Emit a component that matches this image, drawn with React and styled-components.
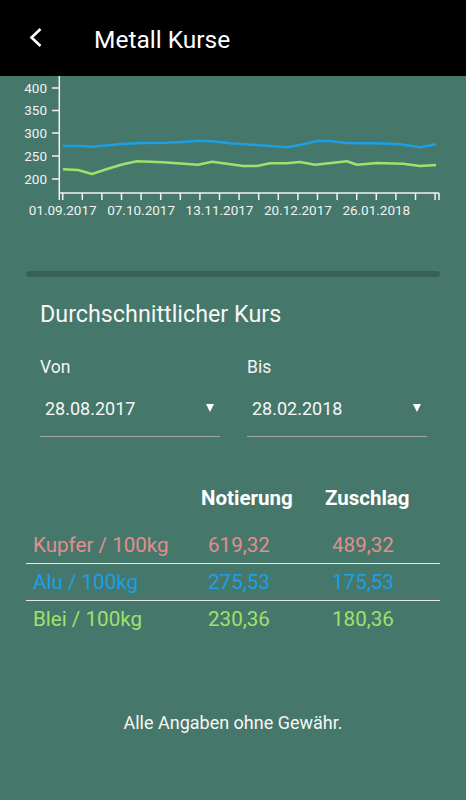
import styled, { createGlobalStyle } from "styled-components";

const GlobalStyle = createGlobalStyle`
  body {
    margin: 0;
    background: #45786a;
    font-family: Roboto, "Noto Sans", sans-serif;
    color: #fff;
  }
`;

// chart data, already in page pixels (x, y)
const blue = [
  [63, 146], [82, 146], [92, 146.7], [103, 145.7], [122, 144], [142, 143],
  [167, 142.7], [187, 141.7], [198, 140.7], [212, 141.3], [230, 143.3],
  [257, 145], [273, 146.3], [287, 147.3], [300, 145], [317, 141], [330, 141],
  [347, 143], [357, 143.3], [377, 143.3], [400, 144.3], [420, 147.3], [436, 144.3],
];

const green = [
  [63, 169.3], [78, 170], [92, 174], [107, 169], [123, 164.3], [137, 161.3],
  [163, 162.3], [198, 164.7], [212, 161.7], [227, 163.7], [243, 166], [257, 166],
  [270, 163.3], [287, 163.3], [300, 162], [315, 164.7], [347, 161.3], [357, 164.7],
  [377, 163], [403, 163.7], [420, 166], [436, 165],
];

const yTicks = [
  { label: "400", y: 88 },
  { label: "350", y: 110.5 },
  { label: "300", y: 133 },
  { label: "250", y: 156 },
  { label: "200", y: 179 },
];

const xLabels = ["01.09.2017", "07.10.2017", "13.11.2017", "20.12.2017", "26.01.2018"];

const rows = [
  { name: "Kupfer / 100kg", notierung: "619,32", zuschlag: "489,32", color: "#e38e8e" },
  { name: "Alu / 100kg", notierung: "275,53", zuschlag: "175,53", color: "#1c9fe5" },
  { name: "Blei / 100kg", notierung: "230,36", zuschlag: "180,36", color: "#a0e06e" },
];

const toPoints = pts => pts.map(p => p.join(",")).join(" ");

const Chart = () => {
  const ticks = [];
  for (let i = 0; i < 20; i++) ticks.push(62.7 + i * 19.6);
  return (
    <ChartSvg viewBox="0 76 466 144" width="466" height="144">
      <g stroke="#f2f2f2" strokeWidth="1.5" fill="none">
        <line x1="59.3" y1="76" x2="59.3" y2="200" />
        <line x1="59.3" y1="193" x2="439" y2="193" />
        <line x1="439" y1="193" x2="439" y2="200" />
        {yTicks.map(t => (
          <line key={t.label} x1="52" y1={t.y} x2="59.3" y2={t.y} />
        ))}
        {ticks.map(x => (
          <line key={x} x1={x} y1="193" x2={x} y2="200" />
        ))}
      </g>
      <g fill="#f2f2f2" fontSize="13.5" fontFamily="Roboto, sans-serif">
        {yTicks.map(t => (
          <text key={t.label} x="47" y={t.y + 4.8} textAnchor="end">
            {t.label}
          </text>
        ))}
        {xLabels.map((l, i) => (
          <text key={l} x={62.7 + i * 4 * 19.6} y="215" textAnchor="middle">
            {l}
          </text>
        ))}
      </g>
      <polyline points={toPoints(blue)} fill="none" stroke="#1c9fe5" strokeWidth="2.6" strokeLinejoin="round" />
      <polyline points={toPoints(green)} fill="none" stroke="#a0e06e" strokeWidth="2.6" strokeLinejoin="round" />
    </ChartSvg>
  );
};

const DateSelect = ({ label, value }) => (
  <Field>
    <FieldLabel>{label}</FieldLabel>
    <SelectBox>
      <span>{value}</span>
      <Caret />
    </SelectBox>
  </Field>
);

const App = () => {
  return (
    <>
      <GlobalStyle />
      <Header>
        <BackButton>
          <svg width="14" height="22" viewBox="0 0 14 22">
            <polyline points="11.5,2 2.5,10.5 11.5,19" fill="none" stroke="#fff" strokeWidth="2.6" />
          </svg>
        </BackButton>
        <Title>Metall Kurse</Title>
      </Header>

      <Chart />

      <Divider />

      <Section>
        <SectionTitle>Durchschnittlicher Kurs</SectionTitle>
        <DateGrid>
          <DateSelect label="Von" value="28.08.2017" />
          <DateSelect label="Bis" value="28.02.2018" />
        </DateGrid>
      </Section>

      <Table>
        <HeadRow>
          <span />
          <HeadCell>Notierung</HeadCell>
          <HeadCell>Zuschlag</HeadCell>
        </HeadRow>
        {rows.map(r => (
          <Row key={r.name} color={r.color}>
            <NameCell>{r.name}</NameCell>
            <ValueCell>{r.notierung}</ValueCell>
            <ValueCell>{r.zuschlag}</ValueCell>
          </Row>
        ))}
      </Table>

      <Footer>Alle Angaben ohne Gewähr.</Footer>
    </>
  );
};

export default App;

const Header = styled.header`
  height: 76px;
  background: #000;
  display: flex;
  align-items: center;
`;

const BackButton = styled.div`
  width: 94px;
  padding-left: 29px;
  box-sizing: border-box;
  display: flex;
  align-items: center;
  svg {
    display: block;
  }
`;

const Title = styled.h1`
  margin: 0 0 -4px 0;
  font-size: 24.5px;
  font-weight: 400;
  color: #fff;
  line-height: 28px;
`;

const ChartSvg = styled.svg`
  display: block;
`;

const Divider = styled.div`
  margin: 51px 26px 0 26px;
  height: 6px;
  border-radius: 3px;
  background: #386155;
`;

const Section = styled.section`
  padding: 0 39px 0 40px;
`;

const SectionTitle = styled.h2`
  margin: 23px 0 0 0;
  font-size: 23.3px;
  font-weight: 400;
  line-height: 28px;
  color: #f6f6f6;
`;

const DateGrid = styled.div`
  display: grid;
  grid-template-columns: 180px 180px;
  column-gap: 27px;
  margin-top: 29px;
`;

const Field = styled.div`
  display: flex;
  flex-direction: column;
`;

const FieldLabel = styled.div`
  font-size: 17.5px;
  line-height: 20px;
  color: #f4f4f4;
`;

const SelectBox = styled.div`
  margin-top: 21px;
  padding: 0 6px 16px 5px;
  border-bottom: 1.5px solid #9fa8a4;
  display: flex;
  align-items: center;
  justify-content: space-between;
  font-size: 18px;
  line-height: 22px;
  color: #f6f6f6;
`;

const Caret = styled.span`
  width: 0;
  height: 0;
  border-left: 4px solid transparent;
  border-right: 4px solid transparent;
  border-top: 8px solid #fff;
  margin-top: -2px;
`;

const Table = styled.div`
  margin: 49px 26px 0 26px;
`;

const columns = `168px 124px 1fr`;

const HeadRow = styled.div`
  display: grid;
  grid-template-columns: ${columns};
  padding-left: 7px;
  margin-bottom: 17px;
`;

const HeadCell = styled.div`
  font-size: 20.5px;
  font-weight: 700;
  line-height: 24px;
  color: #fff;
`;

const Row = styled.div`
  display: grid;
  grid-template-columns: ${columns};
  padding: 6px 0 6px 7px;
  font-size: 20.6px;
  line-height: 24px;
  color: ${({ color }) => color};
  border-bottom: 1.5px solid #e8e8e8;
  &:last-child {
    border-bottom: none;
  }
`;

const NameCell = styled.div``;

const ValueCell = styled.div`
  padding-left: 7px;
`;

const Footer = styled.footer`
  margin-top: 75px;
  text-align: center;
  font-size: 18px;
  line-height: 22px;
  color: #f6f6f6;
`;
